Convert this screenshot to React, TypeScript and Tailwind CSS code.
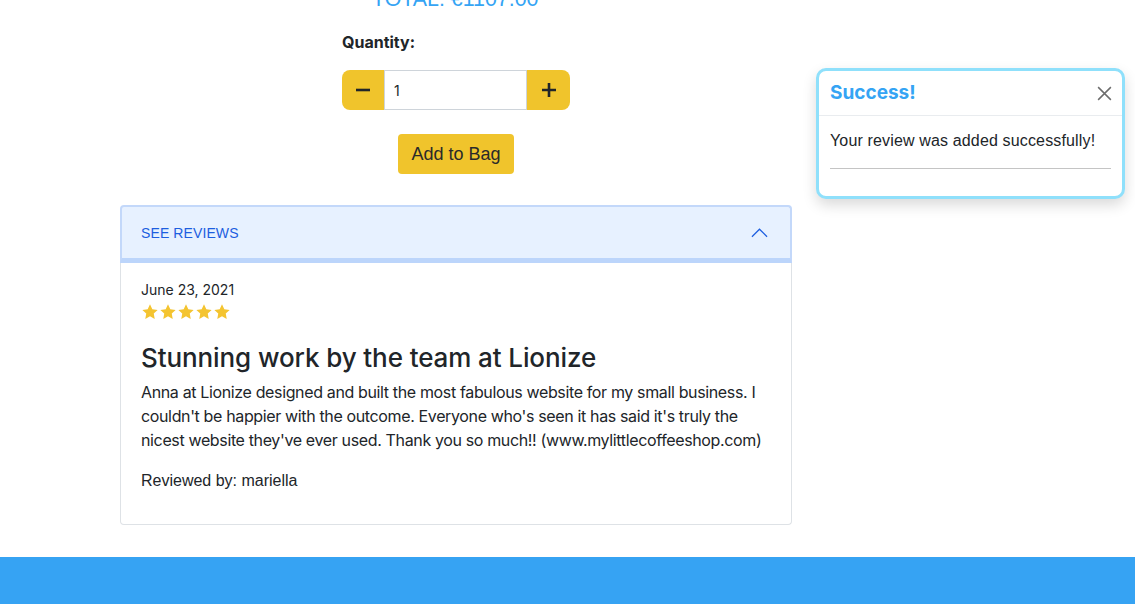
import React from 'react';

const sf = "font-['Inter','Noto_Sans',sans-serif]";
const helv = "font-['Liberation_Sans',Arial,sans-serif]";

const Star: React.FC = () => (
  <svg viewBox="0 0 24 24" className="w-[18px] h-[18px]" fill="#f4c430">
    <path d="M12 1.8l3.1 6.5 7.1.9-5.2 4.9 1.3 7.1L12 17.8l-6.3 3.4 1.3-7.1-5.2-4.9 7.1-.9z" />
  </svg>
);

const Toast: React.FC = () => (
  <div className="absolute left-[816px] top-[68px] w-[309px] h-[131px] rounded-[10px] border-[3px] border-[#8fe0fb] bg-white shadow-[0_6px_14px_rgba(0,0,0,0.15)]">
    <div className="flex items-center justify-between h-[45px] pl-[11px] pr-[9px] pt-[1px] border-b border-[#e9ecef]">
      <span className={`${sf} text-[19px] font-bold text-[#35a4f4]`}>Success!</span>
      <svg viewBox="0 0 16 16" className="w-[17px] h-[17px]" stroke="#6c6c6c" strokeWidth="1.4" fill="none">
        <path d="M2 2l12 12M14 2L2 14" />
      </svg>
    </div>
    <div className="px-[11px] pt-[13px]">
      <p className={`${helv} text-[16px] tracking-[0.15px] text-[#212529] leading-[24px]`}>Your review was added successfully!</p>
      <div className="mt-[15px] h-px bg-[#c4c4c4]" />
    </div>
  </div>
);

export default function App() {
  return (
    <div className="relative w-[1135px] h-[604px] overflow-hidden bg-white">
      <div className="w-[912px] flex flex-col items-center">
        <div className="w-[228px] flex flex-col">
          <div className={`${helv} -mt-[14px] ml-[30px] text-[21.4px] leading-[26px] text-[#35a4f4]`}>TOTAL: €1107.00</div>
          <div className={`${sf} mt-[20px] text-[16px] font-bold text-[#212529] leading-[20px]`}>Quantity:</div>
          <div className="mt-[18px] flex h-[40px]">
            <button className="w-[42px] bg-[#f0c42c] rounded-l-[8px] flex items-center justify-center">
              <svg viewBox="0 0 16 16" className="w-[16px] h-[16px]" fill="none" stroke="#212529" strokeWidth="2.6">
                <path d="M1 8h14" />
              </svg>
            </button>
            <div className={`${sf} flex-1 border border-[#ced4da] bg-white flex items-center pl-[9px] text-[14px] text-[#212529]`}>1</div>
            <button className="w-[43px] bg-[#f0c42c] rounded-r-[8px] flex items-center justify-center">
              <svg viewBox="0 0 16 16" className="w-[16px] h-[16px]" fill="none" stroke="#212529" strokeWidth="2.6">
                <path d="M1 8h14M8 1v14" />
              </svg>
            </button>
          </div>
        </div>
        <button className={`${helv} mt-[24px] h-[40px] w-[116px] rounded-[4px] bg-[#f0c42c] text-[18px] text-[#2a2a2a]`}>Add to Bag</button>

        <div className="mt-[31px] w-[672px]">
          <div className="h-[58px] bg-[#e7f1ff] border-[2px] border-[#c3d8fa] border-b-[5px] border-b-[#bcd5fb] rounded-t-[4px] flex items-center justify-between pl-[19px] pr-[22px] pt-[1px]">
            <span className={`${helv} text-[14px] text-[#1d5ee0] tracking-[0.1px]`}>SEE REVIEWS</span>
            <svg viewBox="0 0 18 10" className="w-[17px] h-[10px]" fill="none" stroke="#1d5ee0" strokeWidth="1.3">
              <path d="M1 9l8-8 8 8" />
            </svg>
          </div>
          <div className={`${sf} h-[262px] border border-t-0 border-[#dee2e6] rounded-b-[4px] px-[20px] pt-[17px] text-[#212529]`}>
            <div className="text-[14px] leading-[20px]">June 23, 2021</div>
            <div className="flex mt-[3px]">
              <Star /><Star /><Star /><Star /><Star />
            </div>
            <h3 className="mt-[21px] text-[26px] font-medium leading-[32px] tracking-[-0.1px] text-[#212529]">Stunning work by the team at Lionize</h3>
            <p className="mt-[6px] text-[16px] leading-[24px] tracking-[-0.36px]">
              Anna at Lionize designed and built the most fabulous website for my small business. I couldn't be happier with the outcome. Everyone who's seen it has said it's truly the nicest website they've ever used. Thank you so much!! (www.mylittlecoffeeshop.com)
            </p>
            <p className={`${helv} mt-[17px] text-[16px] leading-[24px]`}>Reviewed by: mariella</p>
          </div>
        </div>
      </div>
      <div className="absolute left-0 right-0 bottom-0 h-[47px] bg-[#36a3f3]" />
      <Toast />
    </div>
  );
}
